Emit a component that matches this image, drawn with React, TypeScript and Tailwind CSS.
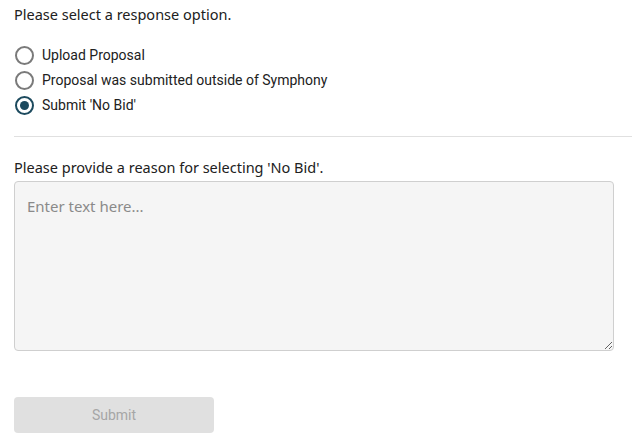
import React, { useState } from "react";

const options = [
  "Upload Proposal",
  "Proposal was submitted outside of Symphony",
  "Submit 'No Bid'",
];

export default function App() {
  const [selected, setSelected] = useState(2);
  const [text, setText] = useState("");
  return (
    <div className="w-[643px] h-[440px] bg-white pl-[14px] pr-[11px] pt-[4px]">
      <p className="text-[14.5px] leading-[20px] text-[#212121] [font-family:'Noto_Sans',sans-serif]">
        Please select a response option.
      </p>
      <div className="mt-[19px] flex flex-col">
        {options.map((o, i) => (
          <label
            key={o}
            className="flex items-center h-[25px] cursor-pointer"
            onClick={() => setSelected(i)}
          >
            <span
              className={
                i === selected
                  ? "ml-[1px] w-[19px] h-[19px] rounded-full border-2 border-[#1c4a5e] flex items-center justify-center"
                  : "ml-[1px] w-[19px] h-[19px] rounded-full border-2 border-[#7a7a7a] flex items-center justify-center"
              }
            >
              {i === selected && (
                <span className="w-[9px] h-[9px] rounded-full bg-[#1c4a5e]" />
              )}
            </span>
            <span className="ml-[8px] text-[14px] text-[#212121] [font-family:Roboto,sans-serif]">
              {o}
            </span>
          </label>
        ))}
      </div>
      <div className="mt-[18px] h-px bg-[#e0e0e0]" />
      <p className="mt-[20px] text-[14.5px] leading-[20px] text-[#212121] [font-family:'Noto_Sans',sans-serif]">
        Please provide a reason for selecting 'No Bid'.
      </p>
      <textarea
        value={text}
        onChange={(e) => setText(e.target.value)}
        placeholder="Enter text here..."
        className="mt-[4px] block w-[600px] h-[170px] rounded-[4px] border border-[#cfcfcf] bg-[#f5f5f5] px-[12px] py-[14px] text-[15px] leading-[20px] text-[#212121] placeholder:text-[#8a8a8a] [font-family:'Noto_Sans',sans-serif] outline-none"
      />
      <button
        disabled
        className="mt-[46px] w-[200px] h-[36px] rounded-[4px] bg-[#e0e0e0] text-[14px] text-[#a6a6a6] [font-family:Roboto,sans-serif]"
      >
        Submit
      </button>
    </div>
  );
}
